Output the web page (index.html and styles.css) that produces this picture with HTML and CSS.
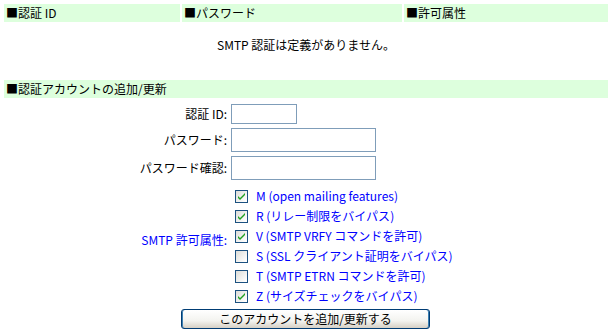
FILE: index.html
```html
<!DOCTYPE html>
<html lang="ja">
<head>
<meta charset="utf-8">
<title>SMTP 認証</title>
<link rel="stylesheet" href="styles.css">
</head>
<body>
<div class="page">
  <div class="head-row">
    <div class="hcell c1">■認証 ID</div>
    <div class="hcell c2">■パスワード</div>
    <div class="hcell c3">■許可属性</div>
  </div>
  <div class="empty">SMTP 認証は定義がありません。</div>

  <div class="hcell bar">■認証アカウントの追加/更新</div>

  <form class="form">
    <label class="lbl r-id" for="uid">認証 ID:</label>
    <div class="fld r-id"><input id="uid" class="txt short" type="text"></div>

    <label class="lbl r-pw" for="pw">パスワード:</label>
    <div class="fld r-pw"><input id="pw" class="txt long" type="password"></div>

    <label class="lbl r-pw2" for="pw2">パスワード確認:</label>
    <div class="fld r-pw2"><input id="pw2" class="txt long" type="password"></div>

    <div class="lbl blue r-attr">SMTP 許可属性:</div>
    <div class="fld r-attr checks">
      <label class="chk"><input type="checkbox" checked><span>M (open mailing features)</span></label>
      <label class="chk"><input type="checkbox" checked><span>R (リレー制限をバイパス)</span></label>
      <label class="chk"><input type="checkbox" checked><span>V (SMTP VRFY コマンドを許可)</span></label>
      <label class="chk"><input type="checkbox"><span>S (SSL クライアント証明をバイパス)</span></label>
      <label class="chk"><input type="checkbox"><span>T (SMTP ETRN コマンドを許可)</span></label>
      <label class="chk"><input type="checkbox" checked><span>Z (サイズチェックをバイパス)</span></label>
    </div>

    <div class="actions"><button type="button" class="btn">このアカウントを追加/更新する</button></div>
  </form>
</div>
</body>
</html>
```

FILE: styles.css
```css
html, body {
  margin: 0;
  padding: 0;
  background: #ffffff;
}
body {
  font-family: "Noto Sans CJK JP", "DejaVu Sans", sans-serif;
  font-size: 12px;
  line-height: 14px;
  color: #000000;
}
.page {
  padding: 4px;
  width: 604px;
}
.head-row {
  display: flex;
  gap: 2px;
}
.hcell {
  background: #ddffdd;
  height: 18px;
  line-height: 18px;
  padding-left: 2px;
  box-sizing: border-box;
  white-space: nowrap;
}
.c1 { width: 176px; }
.c2 { width: 220px; }
.c3 { width: 204px; }
.empty {
  height: 58px;
  line-height: 46px;
  text-align: center;
}
.bar {
  width: 604px;
}
.form {
  margin: 0;
  padding-top: 4px;
  display: grid;
  grid-template-columns: 223px 1fr;
  grid-template-rows: 24px 28px 28px 124px 23px;
  column-gap: 4px;
}
.lbl {
  display: flex;
  align-items: center;
  justify-content: flex-end;
  white-space: nowrap;
}
.fld {
  display: flex;
  align-items: center;
}
.blue { color: #0000ff; }
.r-attr.lbl { padding-bottom: 8px; }
.txt {
  box-sizing: border-box;
  border: 1px solid #7f9db9;
  background: #fff;
  margin: 0;
  padding: 1px 2px;
  font: inherit;
  outline: none;
}
.short { width: 66px; height: 20px; }
.long { width: 145px; height: 24px; }
.checks {
  flex-direction: column;
  align-items: flex-start;
  padding-top: 4px;
}
.chk {
  display: flex;
  align-items: center;
  height: 20px;
  color: #0000ff;
  white-space: nowrap;
}
.chk input {
  appearance: none;
  -webkit-appearance: none;
  box-sizing: border-box;
  width: 13px;
  height: 13px;
  margin: 0 8px 0 4px;
  border: 1px solid #1c5180;
  background: linear-gradient(135deg, #dcdcd7 0%, #ffffff 90%);
}
.chk input:checked {
  background:
    url("data:image/svg+xml;utf8,<svg xmlns='http://www.w3.org/2000/svg' width='11' height='11' viewBox='0 0 11 11'><path d='M2 5 L4 7 L9 2 L9 4 L4 9 L2 7 Z' fill='%2321a121'/></svg>") no-repeat center,
    linear-gradient(135deg, #dcdcd7 0%, #ffffff 90%);
}
.actions {
  grid-column: 1 / span 2;
  display: flex;
  justify-content: center;
  align-items: flex-end;
}
.btn {
  box-sizing: border-box;
  width: 249px;
  height: 20px;
  margin-right: 1px;
  padding: 0;
  font: inherit;
  color: #000;
  border: 1px solid #003c74;
  border-radius: 3px;
  background: linear-gradient(180deg, #ffffff 0%, #f3f3ef 60%, #d6d0c5 100%);
  box-shadow: inset 1px 0 0 #3c7fb1, inset -1px 0 0 #3c7fb1;
}
```
